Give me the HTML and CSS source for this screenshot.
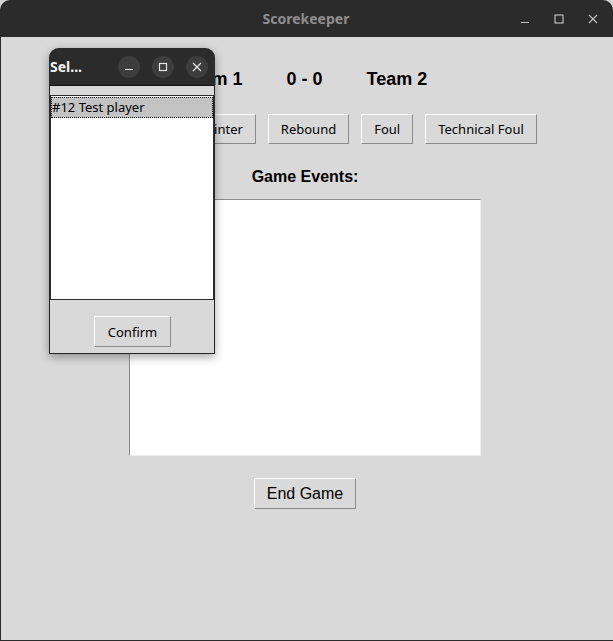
FILE: index.html
```html
<!DOCTYPE html>
<html>
<head>
<meta charset="utf-8">
<title>Scorekeeper</title>
<link rel="stylesheet" href="styles.css">
</head>
<body>
<div class="window">
  <div class="titlebar">
    <div></div>
    <div class="title">Scorekeeper</div>
    <div class="controls">
      <span class="ctl"><svg width="10" height="10" viewBox="0 0 10 10"><path d="M1 8.5h8" stroke="#bdbdbd" stroke-width="1.2"/></svg></span>
      <span class="ctl"><svg width="10" height="10" viewBox="0 0 10 10"><rect x="1" y="1" width="8" height="8" fill="none" stroke="#bdbdbd" stroke-width="1.2"/></svg></span>
      <span class="ctl"><svg width="10" height="10" viewBox="0 0 10 10"><path d="M1 1L9 9M9 1L1 9" stroke="#bdbdbd" stroke-width="1.2"/></svg></span>
    </div>
  </div>
  <div class="main">
    <div class="score">
      <span>Team 1</span>
      <span>0 - 0</span>
      <span>Team 2</span>
    </div>
    <div class="actions">
      <button class="btn">2 Pointer</button>
      <button class="btn">3 Pointer</button>
      <button class="btn">Rebound</button>
      <button class="btn">Foul</button>
      <button class="btn">Technical Foul</button>
    </div>
    <div class="label">Game Events:</div>
    <div class="events"></div>
    <button class="btn big">End Game</button>
  </div>

  <div class="dialog">
    <div class="dtitlebar">
      <span class="dtitle">Sel...</span>
      <div class="dcontrols">
        <span class="circ"><svg width="10" height="10" viewBox="0 0 10 10"><path d="M1 7.5h8" stroke="#e8e8e8" stroke-width="1.2"/></svg></span>
        <span class="circ"><svg width="10" height="10" viewBox="0 0 10 10"><rect x="1.5" y="1.5" width="7" height="7" fill="none" stroke="#e8e8e8" stroke-width="1.2"/></svg></span>
        <span class="circ"><svg width="10" height="10" viewBox="0 0 10 10"><path d="M1 1L9 9M9 1L1 9" stroke="#e8e8e8" stroke-width="1.2"/></svg></span>
      </div>
    </div>
    <div class="dbody">
      <div class="listbox">
        <div class="item selected">#12 Test player</div>
      </div>
      <div class="dfoot">
        <button class="btn">Confirm</button>
      </div>
    </div>
  </div>
</div>
</body>
</html>
```

FILE: styles.css
```css
html, body {
  margin: 0;
  padding: 0;
  background: #d4d4d4;
}
.window {
  position: relative;
  width: 613px;
  height: 641px;
  background: #2b2b2b;
  border-radius: 10px 10px 0 0;
  display: flex;
  flex-direction: column;
  overflow: hidden;
}
.titlebar {
  height: 37px;
  flex: none;
  display: grid;
  grid-template-columns: 1fr auto 1fr;
  align-items: center;
}
.title {
  font-family: "Noto Sans", sans-serif;
  font-weight: bold;
  font-size: 14px;
  color: #8e8e8e;
  margin-left: -1px;
}
.controls {
  display: flex;
  justify-content: flex-end;
  gap: 24px;
  padding-right: 15px;
}
.ctl {
  width: 10px;
  height: 10px;
  display: flex;
}
.main {
  flex: 1;
  background: #d9d9d9;
  margin: 0 0 1px 1px;
  display: flex;
  flex-direction: column;
  align-items: center;
  padding-top: 31px;
  padding-right: 4px;
}
.score {
  display: flex;
  gap: 44px;
  font-family: "Liberation Sans", Arial, sans-serif;
  font-weight: bold;
  font-size: 18px;
  line-height: 22px;
  color: #000;
  margin-left: -1px;
}
.actions {
  display: flex;
  gap: 12px;
  margin-top: 24px;
  margin-left: 8px;
}
.btn {
  font-family: "Noto Sans", sans-serif;
  font-size: 13px;
  color: #000;
  background: #d9d9d9;
  height: 30px;
  padding: 0 12px;
  border: 1px solid;
  border-color: #ffffff #8a8a8a #8a8a8a #ffffff;
  border-radius: 0;
  margin: 0;
  line-height: 28px;
}
.label {
  margin-top: 23px;
  font-family: "Liberation Sans", Arial, sans-serif;
  font-weight: bold;
  font-size: 16px;
  line-height: 19px;
  color: #000;
}
.events {
  margin-top: 13px;
  width: 352px;
  height: 257px;
  box-sizing: border-box;
  background: #fff;
  border: 1px solid;
  border-color: #8c8c8c #ececec #ececec #8c8c8c;
  margin-left: -1px;
}
.btn.big {
  margin-top: 22px;
  font-family: "Liberation Sans", Arial, sans-serif;
  font-size: 16px;
  height: 31px;
  padding: 0 12px;
  line-height: 29px;
}

/* dialog */
.dialog {
  position: absolute;
  left: 49px;
  top: 48px;
  width: 166px;
  height: 306px;
  box-sizing: border-box;
  border: 1px solid #262626;
  border-top: none;
  border-radius: 10px 10px 0 0;
  background: #d9d9d9;
  box-shadow: 0 3px 10px rgba(0, 0, 0, 0.35);
  display: flex;
  flex-direction: column;
}
.dtitlebar {
  height: 38px;
  flex: none;
  background: #2b2b2b;
  border-radius: 10px 10px 0 0;
  border-bottom: 1px solid #161616;
  box-sizing: border-box;
  display: flex;
  align-items: center;
  justify-content: space-between;
  margin: 0 -1px;
}
.dtitle {
  font-family: "Noto Sans", sans-serif;
  font-weight: bold;
  font-size: 14px;
  color: #f2f2f2;
  margin-left: 1px;
}
.dcontrols {
  display: flex;
  gap: 12px;
  padding-right: 7px;
}
.circ {
  width: 22px;
  height: 22px;
  border-radius: 50%;
  background: #3d3d3d;
  display: flex;
  align-items: center;
  justify-content: center;
}
.dbody {
  flex: 1;
  display: flex;
  flex-direction: column;
  padding-top: 9px;
}
.listbox {
  height: 205px;
  box-sizing: border-box;
  background: #fff;
  border: 1px solid #2e2e2e;
  padding: 1px 0 0 0;
}
.item {
  font-family: "Noto Sans", sans-serif;
  font-size: 13px;
  line-height: 19px;
  color: #000;
  padding-left: 1px;
}
.item.selected {
  background: #c3c3c3;
  outline: 1px dotted #000;
  outline-offset: -1px;
  height: 21px;
  line-height: 21px;
}
.dfoot {
  flex: 1;
  display: flex;
  justify-content: center;
  align-items: flex-start;
  padding-top: 16px;
}
.dfoot .btn {
  height: 31px;
  padding: 0 13px;
  margin-left: 1px;
}
```
